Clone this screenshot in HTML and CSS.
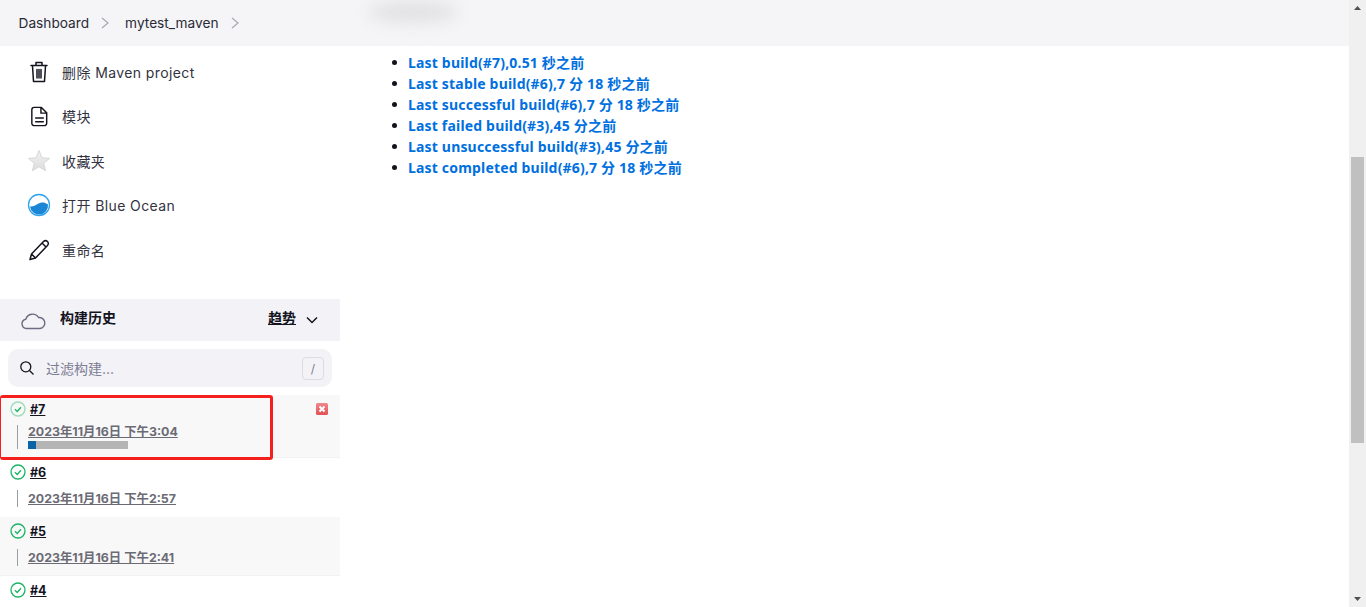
FILE: index.html
```html
<!DOCTYPE html>
<html lang="zh-CN">
<head>
<meta charset="utf-8">
<title>mytest_maven</title>
<link rel="stylesheet" href="styles.css">
</head>
<body>
<div class="page">
  <div class="content">
    <header class="crumbs">
      <a class="crumb">Dashboard</a>
      <svg class="sep" viewBox="0 0 10 14"><path d="M2 2l6 5-6 5"/></svg>
      <a class="crumb">mytest_maven</a>
      <svg class="sep" viewBox="0 0 10 14"><path d="M2 2l6 5-6 5"/></svg>
      <span class="blur"></span>
    </header>
    <div class="body">
      <aside class="side">
        <nav class="tasks">
          <a class="task"><span class="ti"><svg viewBox="0 0 24 24" width="24" height="24" class="line"><path d="M4 5.500h16M9 5V2.500h6V5M5.500 6l1 15.500h11l1-15.500M10 9.500v8.500M12 9.500v8.500M14 9.500v8.500"/></svg></span>删除 Maven project</a>
          <a class="task"><span class="ti"><svg viewBox="0 0 24 24" width="23" height="23" class="line"><path d="M6.500 2.500h7.500l5.500 5.500v11a2.500 2.500 0 0 1-2.500 2.500H6.500A2.500 2.500 0 0 1 4 19V5a2.500 2.500 0 0 1 2.500-2.500zM13.500 3v5.500h5.500M8 13.500h8M8 17.500h8"/></svg></span>模块</a>
          <a class="task"><span class="ti"><svg viewBox="0 0 24 24" width="24" height="24"><defs><linearGradient id="star" x1="0" y1="0" x2="0" y2="1"><stop offset="0" stop-color="#f2f2f2"/><stop offset="1" stop-color="#dcdcdc"/></linearGradient></defs><path d="M12 1.500l3 7.300 7.500.6-5.700 4.900 1.800 7.400L12 17.800l-6.600 3.900 1.800-7.400L1.500 9.400 9 8.800z" fill="url(#star)" stroke="#d8d8d8"/></svg></span>收藏夹</a>
          <a class="task"><span class="ti"><svg viewBox="0 0 24 24" width="24" height="24"><circle cx="12" cy="12" r="10.500" fill="#fff" stroke="#2ea3ee" stroke-width="1.300"/><path d="M3 13.500c3 .5 5-1 7.500-2.500 3-2 7-2.500 10.500.5a9 9 0 0 1-18 2z" fill="#1c86d6"/></svg></span>打开 Blue Ocean</a>
          <a class="task"><span class="ti"><svg viewBox="0 0 24 24" width="24" height="24" class="line"><path d="M3 21.500l1.500-5.500L16.500 3.500a2.500 2.500 0 0 1 4 4L8.500 20zM4.500 16l4 4M15 5l4 4"/></svg></span>重命名</a>
        </nav>
        <section class="history">
          <div class="hhead">
            <svg class="cloud" viewBox="0 0 26 18" width="26" height="18"><path d="M6.500 16.500a4.700 4.700 0 0 1-.7-9.300A7 7 0 0 1 18.500 5.500a5.500 5.500 0 0 1 1.500 11z"/></svg>
            <span class="htitle">构建历史</span>
            <a class="trend">趋势</a>
            <svg class="chev" viewBox="0 0 12 8" width="12" height="8"><path d="M1 1.500l5 5 5-5"/></svg>
          </div>
          <div class="filter">
            <svg class="glass" viewBox="0 0 16 16" width="16" height="16"><circle cx="6.800" cy="6.800" r="5"/><path d="M10.500 10.500l4 4"/></svg>
            <span class="ph">过滤构建...</span>
            <kbd class="key">/</kbd>
          </div>
          <div class="builds">
            <article class="build alt running">
              <div class="bline">
                <svg class="ok faded" viewBox="0 0 16 16" width="16" height="16"><circle cx="8" cy="8" r="7"/><path d="M5 8.300l2.200 2.200 3.800-4.300"/></svg>
                <a class="num">#7</a>
              </div>
              <div class="dline">
                <a class="date">2023年11月16日 下午3:04</a>
                <div class="bar"><span class="fill"></span></div>
              </div>
              <svg class="stop" viewBox="0 0 12 12" width="12" height="12"><defs><linearGradient id="red" x1="0" y1="0" x2="0" y2="1"><stop offset="0" stop-color="#f08a8a"/><stop offset="1" stop-color="#e25055"/></linearGradient></defs><rect width="12" height="12" rx="1.500" fill="url(#red)"/><path d="M3.500 3.500l5 5M8.500 3.500l-5 5" stroke="#fff" stroke-width="2"/></svg>
              <span class="mark"></span>
            </article>
            <article class="build">
              <div class="bline">
                <svg class="ok" viewBox="0 0 16 16" width="16" height="16"><circle cx="8" cy="8" r="7"/><path d="M5 8.300l2.200 2.200 3.800-4.300"/></svg>
                <a class="num">#6</a>
              </div>
              <div class="dline"><a class="date">2023年11月16日 下午2:57</a></div>
            </article>
            <article class="build alt">
              <div class="bline">
                <svg class="ok" viewBox="0 0 16 16" width="16" height="16"><circle cx="8" cy="8" r="7"/><path d="M5 8.300l2.200 2.200 3.800-4.300"/></svg>
                <a class="num">#5</a>
              </div>
              <div class="dline"><a class="date">2023年11月16日 下午2:41</a></div>
            </article>
            <article class="build">
              <div class="bline">
                <svg class="ok" viewBox="0 0 16 16" width="16" height="16"><circle cx="8" cy="8" r="7"/><path d="M5 8.300l2.200 2.200 3.800-4.300"/></svg>
                <a class="num">#4</a>
              </div>
            </article>
          </div>
        </section>
      </aside>
      <main class="main">
        <ul class="perma">
          <li><a>Last build(#7),0.51 秒之前</a></li>
          <li><a>Last stable build(#6),7 分 18 秒之前</a></li>
          <li><a>Last successful build(#6),7 分 18 秒之前</a></li>
          <li><a>Last failed build(#3),45 分之前</a></li>
          <li><a>Last unsuccessful build(#3),45 分之前</a></li>
          <li><a>Last completed build(#6),7 分 18 秒之前</a></li>
        </ul>
      </main>
    </div>
  </div>
  <div class="scrollbar">
    <svg class="arrow" viewBox="0 0 7 4" width="7" height="4"><path d="M3.500 0L7 4H0z"/></svg>
    <div class="track"><div class="thumb"></div></div>
    <svg class="arrow" viewBox="0 0 7 4" width="7" height="4"><path d="M0 0h7L3.500 4z"/></svg>
  </div>
</div>
</body>
</html>
```
FILE: styles.css
```css
* { box-sizing: border-box; }
html, body { margin: 0; height: 100%; overflow: hidden; background: #fff; }
body { font-family: Inter, "Noto Sans CJK SC", sans-serif; font-size: 14px; color: #14141f; }
.page { display: flex; height: 607px; }
.content { flex: 1; min-width: 0; display: flex; flex-direction: column; }

.crumbs { position: relative; height: 46px; background: #f5f5f7; display: flex; align-items: center; padding-left: 18.500px; }
.crumb { color: #2a2a36; font-size: 13.700px; }
.sep { width: 10px; height: 14px; margin: 0 15px 0 11px; fill: none; stroke: #a8a8b0; stroke-width: 1.200; }
.blur { position: absolute; left: 368px; top: 2px; width: 90px; height: 20px; border-radius: 50%; background: #e0e0e3; filter: blur(8px); }

.body { flex: 1; display: flex; min-height: 0; }
.side { width: 340px; flex: none; }
.tasks { padding-top: 3.500px; }
.task { display: flex; align-items: center; height: 44.500px; padding-left: 27px; color: #33333f; font-size: 14px; letter-spacing: .4px; }
.ti { width: 24px; height: 24px; margin-right: 11px; display: flex; align-items: center; justify-content: center; }
.line { fill: none; stroke: #14141f; stroke-width: 1.500; stroke-linecap: round; stroke-linejoin: round; }

.history { margin-top: 27px; }
.hhead { height: 42px; background: #f3f3f7; display: flex; align-items: center; padding: 0 22px 0 20px; }
.cloud { fill: none; stroke: #6b6b82; stroke-width: 1.400; margin-top: 2px; }
.htitle { margin: 0 0 7px 14px; font-size: 14px; font-weight: 700; flex: 1; }
.trend { margin-bottom: 7px; font-size: 14px; font-weight: 700; text-decoration: underline; }
.chev { margin-left: 10px; fill: none; stroke: #14141f; stroke-width: 1.500; }

.filter { margin: 8px; height: 38px; border-radius: 10px; background: #f3f3f7; display: flex; align-items: center; padding: 0 8px 0 11px; }
.glass { fill: none; stroke: #14141f; stroke-width: 1.300; }
.ph { margin-left: 11px; flex: 1; color: #7d7d94; font-size: 14px; }
.key { width: 22px; height: 23px; border: 1px solid #dcdce3; border-radius: 4px; display: flex; align-items: center; justify-content: center; font: 12px Inter, sans-serif; color: #7d7d94; }

.build { position: relative; height: 59px; padding: 5px 0 0 10px; }
.alt { background: #f8f8f8; border-bottom: 1px solid #f2f2f2; }
.running { height: 63px; }
.bline { display: flex; align-items: center; height: 18px; }
.ok { fill: none; stroke: #1ab465; stroke-width: 1.300; overflow: visible; }
.faded circle { stroke: #9fddbd; stroke-width: 1.500; }
.num { margin-left: 4px; font-size: 12.500px; font-weight: 700; text-decoration: underline; color: #14141f; }
.dline { margin: 9px 0 0 7px; padding-left: 10px; border-left: 1px solid #9c9ca6; min-height: 17px; }
.date { display: block; font-size: 12.400px; line-height: 14px; font-weight: 700; color: #6b6b75; text-decoration: underline; padding-top: 2px; }
.running .date { margin-top: -2px; padding-top: 0; }
.bar { width: 100px; height: 8px; background: #b5b5b5; margin-top: 2px; }
.fill { display: block; width: 8px; height: 8px; background: #0a64a8; }
.stop { position: absolute; left: 316px; top: 8px; }
.mark { position: absolute; left: 0; top: 0; width: 273px; height: 65px; border: 3px solid #f5201c; border-left-width: 1px; border-radius: 3px; }

.main { flex: 1; min-width: 0; }
.perma { margin: 6px 0 0; padding: 0 0 0 68px; list-style: none; font-family: "Noto Sans", "Noto Sans CJK SC", sans-serif; font-size: 14px; letter-spacing: .18px; line-height: 21px; font-weight: 700; }
.perma li { display: flex; align-items: center; }
.perma li::before { content: ""; width: 5px; height: 5px; border-radius: 50%; background: #14141f; margin: 0 11.500px 0 -16.500px; }
.perma a { color: #0070e0; }

.scrollbar { width: 17px; flex: none; background: #f0f0f0; display: flex; flex-direction: column; align-items: center; padding: 6px 0; }
.arrow { fill: #505050; flex: none; }
.track { flex: 1; width: 100%; padding: 147px 2px 0; }
.thumb { height: 286px; background: #c0c0c0; }
```
